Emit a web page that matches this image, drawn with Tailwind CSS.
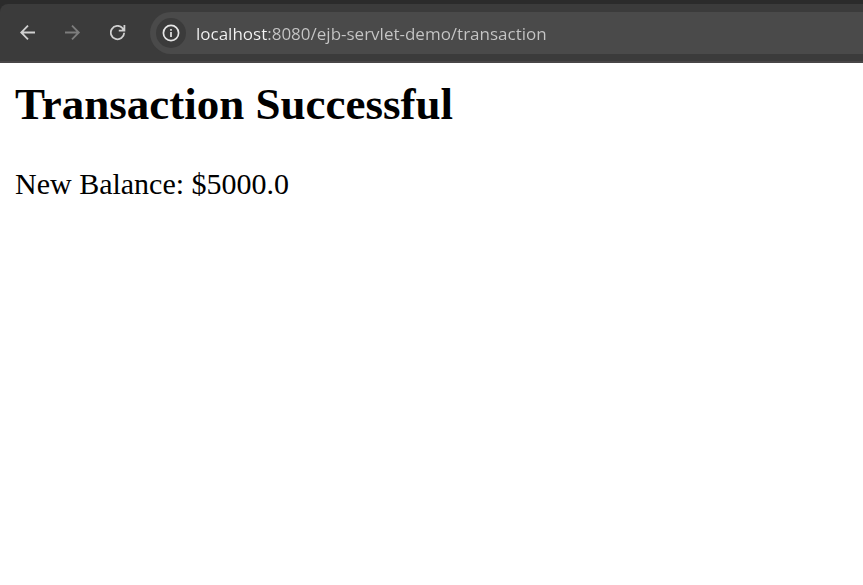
<!DOCTYPE html>
<html lang="en">
<head>
<meta charset="utf-8">
<meta name="viewport" content="width=device-width, initial-scale=1">
<title>Transaction</title>
<script src="https://cdn.jsdelivr.net/npm/@tailwindcss/browser@4"></script>
</head>
<body class="flex min-h-screen flex-col bg-white text-black">
<header class="bg-[#2b2b2b] pt-1">
  <nav aria-label="Browser" class="flex items-center rounded-tl-lg border-b-2 border-[#484647] bg-[#3b3b3b] pt-2 pb-[7px] pl-[17px]">
    <button type="button" aria-label="Back" class="flex size-[22px] items-center justify-center text-[#d0d0d0]">
      <svg class="size-4" viewBox="0 0 16 16" fill="none" stroke="currentColor" stroke-width="1.8"><path d="M15 7.500H1.200M8 .6 1.200 7.500 8 14.400"/></svg>
    </button>
    <button type="button" aria-label="Forward" disabled class="ml-[23px] flex size-[22px] items-center justify-center text-[#7d7d7d]">
      <svg class="size-4" viewBox="0 0 16 16" fill="none" stroke="currentColor" stroke-width="1.8"><path d="M0 7.500h13.800M7 .6l6.800 6.900L7 14.400"/></svg>
    </button>
    <button type="button" aria-label="Reload" class="ml-[23px] flex size-[22px] items-center justify-center text-[#d0d0d0]">
      <svg class="size-4" viewBox="0 0 16 16" fill="none" stroke="currentColor" stroke-width="1.8"><path d="M14.200 7.800A6.700 6.700 0 1 1 12.500 3.100L14 5"/><path d="M14.400 0v5.700H8.800"/><path d="M14.500 2v4h-4z" fill="currentColor" stroke="none"/></svg>
    </button>
    <form class="ml-[21px] flex h-[42px] min-w-0 flex-1 items-center rounded-l-full bg-[#4a4a4a] pl-[6px]">
      <button type="button" aria-label="Site information" class="flex size-[30px] shrink-0 items-center justify-center rounded-full bg-[#3b3b3b] text-[#e6e6e6]">
        <svg class="size-[18px]" viewBox="0 0 18 18" fill="none" stroke="currentColor" stroke-width="1.7"><circle cx="9" cy="9" r="7.600"/><path d="M9 8v5M9 5v1.800"/></svg>
      </button>
      <input type="text" aria-label="Address" value="localhost:8080/ejb-servlet-demo/transaction" spellcheck="false" class="ml-[10px] h-full min-w-0 flex-1 bg-[linear-gradient(90deg,#f4f4f4_71px,#c6c6c6_71px)] bg-clip-text font-['Open_Sans',sans-serif] text-[17px] text-transparent caret-white outline-none">
    </form>
  </nav>
</header>
<main class="px-[15px] pt-[15px] font-['Liberation_Serif',serif]">
  <h2 class="text-[45px] leading-[52px] font-bold">Transaction Successful</h2>
  <p class="mt-[37px] text-[30px] leading-[34px]">New Balance: $5000.0</p>
</main>
</body>
</html>
